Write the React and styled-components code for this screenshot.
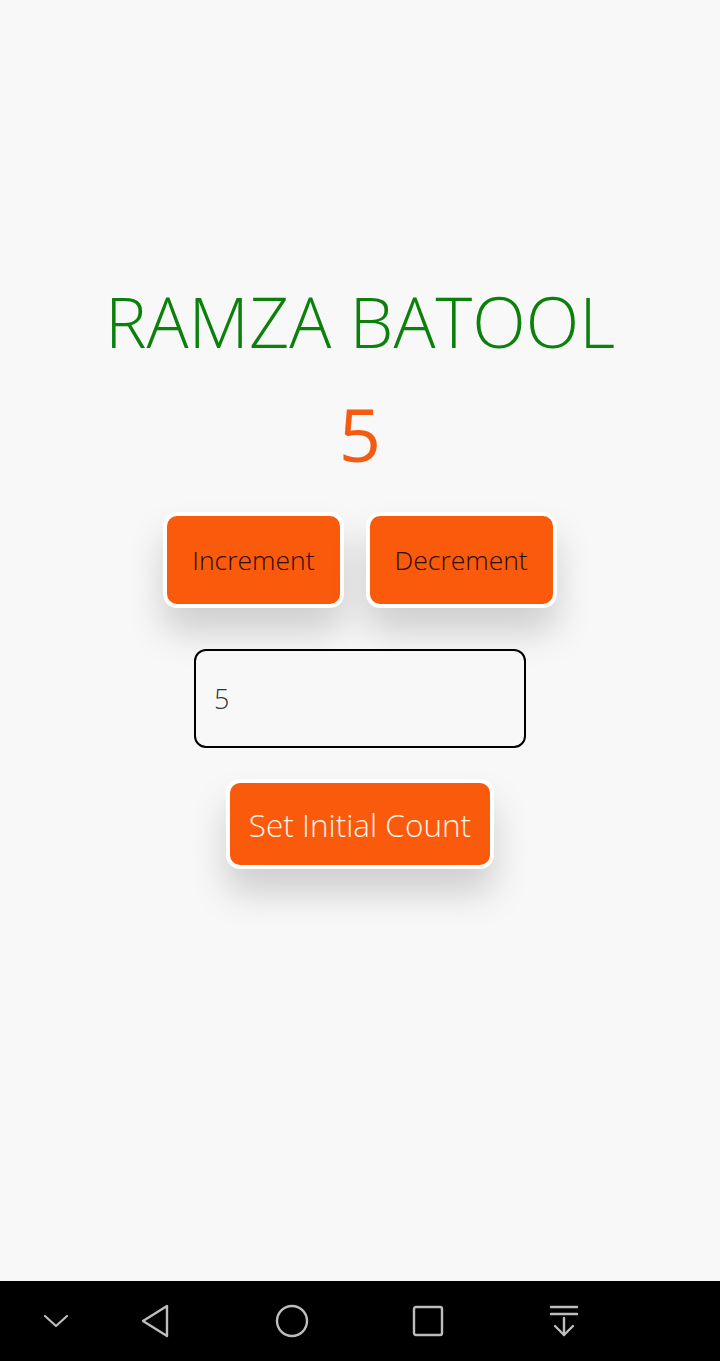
import React, { useState } from 'react'
import styled, { createGlobalStyle } from 'styled-components'

const GlobalStyle = createGlobalStyle`
  html, body {
    margin: 0;
    padding: 0;
    background: #f8f8f8;
    font-family: "Open Sans", "Noto Sans", sans-serif;
  }
`

const Screen = styled.div`
  width: 720px;
  height: 1361px;
  display: flex;
  flex-direction: column;
  background: #f8f8f8;
  overflow: hidden;
`

const Main = styled.div`
  flex: 1;
  display: flex;
  flex-direction: column;
  align-items: center;
  padding-top: 273px;
`

const Title = styled.h1`
  margin: 0;
  font-size: 70px;
  font-weight: 300;
  line-height: 96px;
  color: #0b800b;
`

const Count = styled.div`
  margin-top: 15px;
  font-size: 74px;
  font-weight: 400;
  line-height: 100px;
  color: #f45b12;
`

const ButtonRow = styled.div`
  display: flex;
  gap: 22px;
  margin-top: 28px;
`

const OrangeButton = styled.button`
  background: #fa5a0b;
  border: 4px solid #ffffff;
  border-radius: 14px;
  height: ${p => p.$h || 96}px;
  padding: 0 ${p => p.$px || 24}px;
  font-family: inherit;
  font-size: ${p => p.$fs || 26}px;
  font-weight: 300;
  color: ${p => p.$light ? '#fff3e6' : '#2b0c02'};
  box-shadow: 0 24px 36px rgba(0, 0, 0, 0.17);
  cursor: pointer;
`

const CountInput = styled.input`
  margin-top: 41px;
  width: 332px;
  height: 99px;
  box-sizing: border-box;
  border: 2px solid #000;
  border-radius: 12px;
  background: #f8f8f8;
  padding: 0 18px;
  font-family: inherit;
  font-size: 27px;
  font-weight: 300;
  color: #333;
  outline: none;
`

const SetWrap = styled.div`
  margin-top: 31px;
`

const NavBar = styled.div`
  height: 80px;
  background: #000;
  display: flex;
  align-items: center;
`

const NavIcon = styled.div`
  width: 56px;
  height: 56px;
  display: flex;
  align-items: center;
  justify-content: center;
  margin-left: ${p => p.$ml}px;
  color: #bdbdbd;
`

export default function App() {
  const [count, setCount] = useState(5)
  const [initial, setInitial] = useState('5')

  return (
    <Screen>
      <GlobalStyle />
      <Main>
        <Title>RAMZA BATOOL</Title>
        <Count>{count}</Count>
        <ButtonRow>
          <OrangeButton $px={25} $fs={26.5} onClick={() => setCount(count + 1)}>Increment</OrangeButton>
          <OrangeButton $px={25} $fs={26.5} onClick={() => setCount(count - 1)}>Decrement</OrangeButton>
        </ButtonRow>
        <CountInput value={initial} onChange={e => setInitial(e.target.value)} />
        <SetWrap>
          <OrangeButton $h={90} $px={19} $fs={31.5} $light onClick={() => setCount(Number(initial) || 0)}>
            Set Initial Count
          </OrangeButton>
        </SetWrap>
      </Main>
      <NavBar>
        <NavIcon $ml={28}>
          <svg width="28" height="28" viewBox="0 0 28 28" fill="none" stroke="currentColor" strokeWidth="2.2" strokeLinecap="round" strokeLinejoin="round">
            <path d="M3 9 L14 19 L25 9" />
          </svg>
        </NavIcon>
        <NavIcon $ml={44}>
          <svg width="32" height="36" viewBox="0 0 32 36" fill="none" stroke="currentColor" strokeWidth="2.4" strokeLinejoin="round">
            <path d="M27 3 L27 33 L3 18 Z" />
          </svg>
        </NavIcon>
        <NavIcon $ml={80}>
          <svg width="36" height="36" viewBox="0 0 36 36" fill="none" stroke="currentColor" strokeWidth="2.4">
            <circle cx="18" cy="18" r="15" />
          </svg>
        </NavIcon>
        <NavIcon $ml={80}>
          <svg width="32" height="32" viewBox="0 0 32 32" fill="none" stroke="currentColor" strokeWidth="2.4">
            <rect x="2" y="2" width="28" height="28" rx="2" />
          </svg>
        </NavIcon>
        <NavIcon $ml={80}>
          <svg width="30" height="34" viewBox="0 0 30 34" fill="none" stroke="currentColor" strokeWidth="2.4" strokeLinecap="round" strokeLinejoin="round">
            <path d="M2 3 H28" />
            <path d="M2 10 H28" />
            <path d="M15 14 V31" />
            <path d="M6 22 L15 31 L24 22" />
          </svg>
        </NavIcon>
      </NavBar>
    </Screen>
  )
}
